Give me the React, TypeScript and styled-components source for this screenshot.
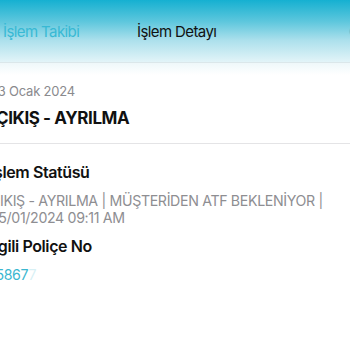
import * as React from 'react'
import styled, { createGlobalStyle } from 'styled-components'

const GlobalStyle = createGlobalStyle`
  html, body {
    margin: 0;
    padding: 0;
    background: #ffffff;
  }
  body {
    font-family: Inter, "Noto Sans", "Liberation Sans", sans-serif;
    -webkit-font-smoothing: antialiased;
  }
`

const App: React.FC = () => {
  return (
    <Page>
      <GlobalStyle />
      <NavBar>
        <BackLabel>İşlem Takibi</BackLabel>
        <NavTitle>İşlem Detayı</NavTitle>
        <NavAction>Cevapla</NavAction>
      </NavBar>
      <NavShade />
      <Summary>
        <DateText>23 Ocak 2024</DateText>
        <Title>ÇIKIŞ - AYRILMA</Title>
      </Summary>
      <Details>
        <Field>
          <Label>İşlem Statüsü</Label>
          <Value>
            ÇIKIŞ - AYRILMA | MÜŞTERİDEN ATF BEKLENİYOR | 25/01/2024 09:11 AM
          </Value>
        </Field>
        <Field>
          <Label>İlgili Poliçe No</Label>
          <Value link>
            15867<Faded>7</Faded>
          </Value>
        </Field>
      </Details>
    </Page>
  )
}

export default App

// Styles
const Page = styled.div`
  width: 350px;
  height: 350px;
  overflow: hidden;
  background: #ffffff;
`

const NavBar = styled.div`
  height: 63px;
  display: flex;
  align-items: center;
  background: linear-gradient(
    to bottom,
    #15b0d1 0%,
    #5ec7dd 35%,
    #ace0ec 65%,
    #e2f4f8 100%
  );
  border-bottom: 1px solid #dbe7ea;
  font-size: 15px;
  letter-spacing: -0.6px;
  padding-top: 1px;
  box-sizing: border-box;
`

const BackLabel = styled.span`
  margin-left: 3px;
  color: #38b9d4;
  width: 134px;
`

const NavTitle = styled.span`
  color: #111111;
  flex: 1;
`

const NavAction = styled.span`
  color: #2fb1cd;
  margin-right: -52px;
`

const NavShade = styled.div`
  height: 12px;
  background: linear-gradient(to bottom, #eef8fa, #ffffff);
`

const Summary = styled.div`
  margin-left: -10px;
  padding: 7px 0 15px;
  border-bottom: 1px solid #e4e4e6;
`

const DateText = styled.div`
  font-size: 13px;
  color: #8a8a8e;
  letter-spacing: -0.2px;
  line-height: 18px;
`

const Title = styled.div`
  margin-top: 8px;
  margin-left: 6px;
  font-size: 17px;
  font-weight: 700;
  color: #111111;
  letter-spacing: -0.4px;
  line-height: 20px;
`

const Details = styled.div`
  margin-left: -10px;
  padding: 19px 12px 0 0;
  display: flex;
  flex-direction: column;
  gap: 11px;
`

const Field = styled.div`
  display: flex;
  flex-direction: column;
  gap: 11px;
`

const Label = styled.div`
  font-size: 16px;
  font-weight: 600;
  color: #111111;
  letter-spacing: -0.4px;
  line-height: 18px;
`

const Value = styled.div<{ link?: boolean }>`
  font-size: 14.2px;
  line-height: 17px;
  letter-spacing: -0.35px;
  color: ${(p) => (p.link ? '#3bb7d0' : '#8e8e92')};
`

const Faded = styled.span`
  opacity: 0.2;
`
